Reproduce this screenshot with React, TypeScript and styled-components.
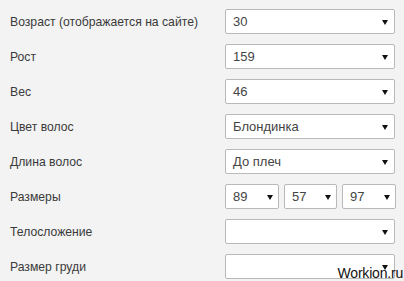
import styled, { createGlobalStyle } from 'styled-components';

const GlobalStyle = createGlobalStyle`
  html, body {
    margin: 0;
    padding: 0;
    background: #f3f3f3;
  }
  body {
    font-family: 'Liberation Sans', Arial, sans-serif;
    font-size: 13px;
    color: #333;
  }
`;

const Page = styled.div`
  position: relative;
  width: 404px;
  height: 281px;
  overflow: hidden;
  padding: 9px 10px 0 10px;
  box-sizing: border-box;
`;

const Form = styled.div`
  display: flex;
  flex-direction: column;
  gap: 10px;
`;

const Row = styled.div`
  display: grid;
  grid-template-columns: 215px 170px;
  align-items: center;
  height: 25px;
`;

const Label = styled.div`
  color: #3a3a3a;
  font-size: 12.2px;
  padding-top: 1px;
`;

const Triple = styled.div`
  display: grid;
  grid-template-columns: 54px 53px 54px;
  gap: 5px;
`;

const SelectBox = styled.div<{ $small?: boolean }>`
  position: relative;
  display: flex;
  align-items: center;
  height: 25px;
  box-sizing: border-box;
  border: 1px solid #b9b9b9;
  border-radius: 2px;
  background: #fff;
  padding-left: 7px;
  color: #444;

  &::after {
    content: '';
    position: absolute;
    right: ${(p) => (p.$small ? '5px' : '6px')};
    top: 10px;
    border-left: 3px solid transparent;
    border-right: 3px solid transparent;
    border-top: 5px solid #111;
  }
`;

const Watermark = styled.div`
  position: absolute;
  right: 1px;
  bottom: 0;
  line-height: 16px;
  font-family: 'Liberation Sans', Arial, sans-serif;
  font-size: 14px;
  color: #111;
  letter-spacing: -0.2px;
`;

const fields = [
  { label: 'Возраст (отображается на сайте)', value: '30' },
  { label: 'Рост', value: '159' },
  { label: 'Вес', value: '46' },
  { label: 'Цвет волос', value: 'Блондинка' },
  { label: 'Длина волос', value: 'До плеч' },
];

export default function App() {
  return (
    <>
      <GlobalStyle />
      <Page>
        <Form>
          {fields.map((f) => (
            <Row key={f.label}>
              <Label>{f.label}</Label>
              <SelectBox>{f.value}</SelectBox>
            </Row>
          ))}
          <Row>
            <Label>Размеры</Label>
            <Triple>
              <SelectBox $small>89</SelectBox>
              <SelectBox $small>57</SelectBox>
              <SelectBox $small>97</SelectBox>
            </Triple>
          </Row>
          <Row>
            <Label>Телосложение</Label>
            <SelectBox />
          </Row>
          <Row>
            <Label>Размер груди</Label>
            <SelectBox />
          </Row>
        </Form>
        <Watermark>Workion.ru</Watermark>
      </Page>
    </>
  );
}
